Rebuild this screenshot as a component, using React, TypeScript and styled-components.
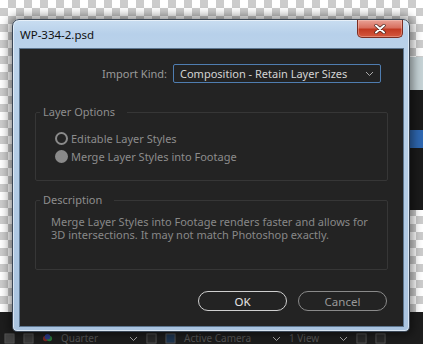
import React from "react"
import styled, { createGlobalStyle } from "styled-components"

const GlobalStyle = createGlobalStyle`
  html, body {
    margin: 0;
    padding: 0;
    background: #1f1f1f;
  }
  body {
    width: 423px;
    height: 344px;
    overflow: hidden;
    font-family: "Noto Sans", "Open Sans", sans-serif;
  }
`

const Stage = styled.div`
  position: relative;
  width: 423px;
  height: 344px;
  display: grid;
  grid-template-rows: 1fr 32px;
  overflow: hidden;
`

const Backdrop = styled.div`
  display: grid;
  grid-template-columns: 1fr 13px;
  background-color: #ffffff;
  background-image: conic-gradient(
    #cccccc 25%,
    #ffffff 0 50%,
    #cccccc 0 75%,
    #ffffff 0
  );
  background-size: 16px 16px;
`

const SidePanel = styled.div`
  display: flex;
  flex-direction: column;
`

interface SegmentProps {
  h: number
  tone: string
}

const Segment = styled.div<SegmentProps>`
  height: ${(p) => p.h}px;
  flex-shrink: 0;
  background: ${(p) => p.tone};
`

const Toolbar = styled.div`
  background: #1d1d1d;
  display: flex;
  align-items: center;
  gap: 8px;
  padding: 21px 0 0 4px;
  color: #555;
  font-size: 10px;
  line-height: 11px;
  white-space: nowrap;
  overflow: hidden;
`

const ToolText = styled.span<{ w: number }>`
  width: ${(p) => p.w}px;
  flex-shrink: 0;
`

const Window = styled.div`
  position: absolute;
  left: 12px;
  top: 19px;
  width: 398px;
  height: 313px;
  box-sizing: border-box;
  border: 1px solid #3a4655;
  border-radius: 7px 7px 5px 5px;
  background: linear-gradient(
    180deg,
    #c9ddf1 0px,
    #b7d0ea 14px,
    #bcd3ea 40px,
    #a9c3df 100%
  );
  box-shadow: 0 0 10px 3px rgba(0, 0, 0, 0.45),
    inset 0 0 0 1px rgba(255, 255, 255, 0.55);
  display: flex;
  flex-direction: column;
  padding: 0 5px 4px 6px;
`

const TitleBar = styled.div`
  height: 28px;
  display: flex;
  justify-content: space-between;
  align-items: flex-start;
`

const Title = styled.span`
  align-self: center;
  padding-left: 1px;
  font-size: 11.5px;
  color: #111;
`

const CloseButton = styled.div`
  width: 46px;
  height: 18px;
  margin-right: 1px;
  box-sizing: border-box;
  border: 1px solid #7b2d22;
  border-top: none;
  border-radius: 0 0 5px 5px;
  background: linear-gradient(
    180deg,
    #e9a296 0%,
    #d8705f 45%,
    #c23a22 55%,
    #d4583f 100%
  );
  box-shadow: inset 0 0 0 1px rgba(255, 220, 210, 0.35);
  display: flex;
  align-items: center;
  justify-content: center;
`

const Content = styled.div`
  flex: 1;
  box-sizing: border-box;
  border: 1px solid #5d7690;
  background: #232323;
  display: flex;
  flex-direction: column;
  padding: 15px 15px 0 15px;
  color: #999;
  font-size: 11px;
`

const KindRow = styled.div`
  display: flex;
  justify-content: flex-end;
  align-items: center;
  gap: 6px;
  padding-right: 7px;
`

const KindLabel = styled.span`
  color: #9a9a9a;
`

const Select = styled.div`
  width: 208px;
  height: 19px;
  box-sizing: border-box;
  border: 1px solid #4f7db0;
  border-radius: 2px;
  display: flex;
  align-items: center;
  justify-content: space-between;
  padding: 0 6px 0 6px;
  color: #d4d4d4;
`

const Group = styled.fieldset<{ top: number }>`
  margin: ${(p) => p.top}px 0 0 0;
  padding: 0;
  border: 1px solid #363636;
  border-radius: 2px;
  min-inline-size: 0;
`

const Legend = styled.legend`
  margin-left: 4px;
  padding: 0 12px 0 3px;
  line-height: 14px;
  color: #8e8e8e;
`

const Options = styled.div`
  display: flex;
  flex-direction: column;
  padding: 10px 0 15px 19px;
`

const OptionRow = styled.div`
  height: 18px;
  display: flex;
  align-items: center;
  gap: 3px;
  color: #8c8c8c;
`

const Radio = styled.span<{ checked?: boolean }>`
  width: 13px;
  height: 13px;
  box-sizing: border-box;
  border-radius: 50%;
  border: 2px solid #8a8a8a;
  background: ${(p) => (p.checked ? "#8a8a8a" : "transparent")};
  flex-shrink: 0;
`

const DescText = styled.p`
  margin: 0;
  padding: 8px 16px 28px 15px;
  line-height: 13px;
  color: #888;
`

const ButtonRow = styled.div`
  display: flex;
  justify-content: flex-end;
  gap: 11px;
  margin-top: 21px;
  padding-right: 1px;
`

const DialogButton = styled.div<{ primary?: boolean }>`
  width: 89px;
  height: 20px;
  box-sizing: border-box;
  border-radius: 10px;
  border: 1px solid ${(p) => (p.primary ? "#cfcfcf" : "#8a8a8a")};
  color: ${(p) => (p.primary ? "#e6e6e6" : "#999")};
  display: flex;
  align-items: center;
  justify-content: center;
  font-size: 11.5px;
`

const Chevron = () => (
  <svg width="9" height="6" viewBox="0 0 9 6">
    <path d="M1 1l3.5 3.5L8 1" fill="none" stroke="#aaa" strokeWidth="1" />
  </svg>
)

const Box = ({ fill }: { fill: string }) => (
  <svg width="11" height="11" viewBox="0 0 12 12">
    <rect x="1" y="1" width="10" height="10" fill={fill} stroke="#555" />
  </svg>
)

const App: React.FC = () => {
  return (
    <>
      <GlobalStyle />
      <Stage>
        <Backdrop>
          <div />
          <SidePanel>
            <Segment h={57} tone="transparent" />
            <Segment h={33} tone="#c6d3d6" />
            <Segment h={40} tone="#1a1a1a" />
            <Segment h={18} tone="#2e67b0" />
            <Segment h={62} tone="#1a1a1a" />
            <Segment h={102} tone="transparent" />
          </SidePanel>
        </Backdrop>
        <Toolbar>
          <Box fill="#444" />
          <Box fill="#3a3a3a" />
          <svg width="11" height="11" viewBox="0 0 12 12">
            <circle cx="4" cy="6" r="3" fill="#7a2a2a" />
            <circle cx="8" cy="6" r="3" fill="#2a7a3a" />
            <circle cx="6" cy="4" r="3" fill="#2a3a8a" />
          </svg>
          <ToolText w={60}>Quarter</ToolText>
          <Chevron />
          <Box fill="#2a2a2a" />
          <Box fill="#1f3550" />
          <ToolText w={80}>Active Camera</ToolText>
          <Chevron />
          <ToolText w={42}>1 View</ToolText>
          <Chevron />
          <Box fill="#2a2a2a" />
          <Box fill="#2a2a2a" />
        </Toolbar>

        <Window>
          <TitleBar>
            <Title>WP-334-2.psd</Title>
            <CloseButton>
              <svg width="12" height="10" viewBox="0 0 12 10">
                <path
                  d="M2 1.5l8 7M10 1.5l-8 7"
                  stroke="#3a1a14"
                  strokeWidth="3.2"
                  strokeLinecap="round"
                />
                <path
                  d="M2 1.5l8 7M10 1.5l-8 7"
                  stroke="#ffffff"
                  strokeWidth="2"
                  strokeLinecap="round"
                />
              </svg>
            </CloseButton>
          </TitleBar>
          <Content>
            <KindRow>
              <KindLabel>Import Kind:</KindLabel>
              <Select>
                <span>Composition - Retain Layer Sizes</span>
                <Chevron />
              </Select>
            </KindRow>

            <Group top={22}>
              <Legend>Layer Options</Legend>
              <Options>
                <OptionRow>
                  <Radio />
                  Editable Layer Styles
                </OptionRow>
                <OptionRow>
                  <Radio checked />
                  Merge Layer Styles into Footage
                </OptionRow>
              </Options>
            </Group>

            <Group top={12}>
              <Legend>Description</Legend>
              <DescText>
                Merge Layer Styles into Footage renders faster and allows for
                3D intersections. It may not match Photoshop exactly.
              </DescText>
            </Group>

            <ButtonRow>
              <DialogButton primary>OK</DialogButton>
              <DialogButton>Cancel</DialogButton>
            </ButtonRow>
          </Content>
        </Window>
      </Stage>
    </>
  )
}

export default App
